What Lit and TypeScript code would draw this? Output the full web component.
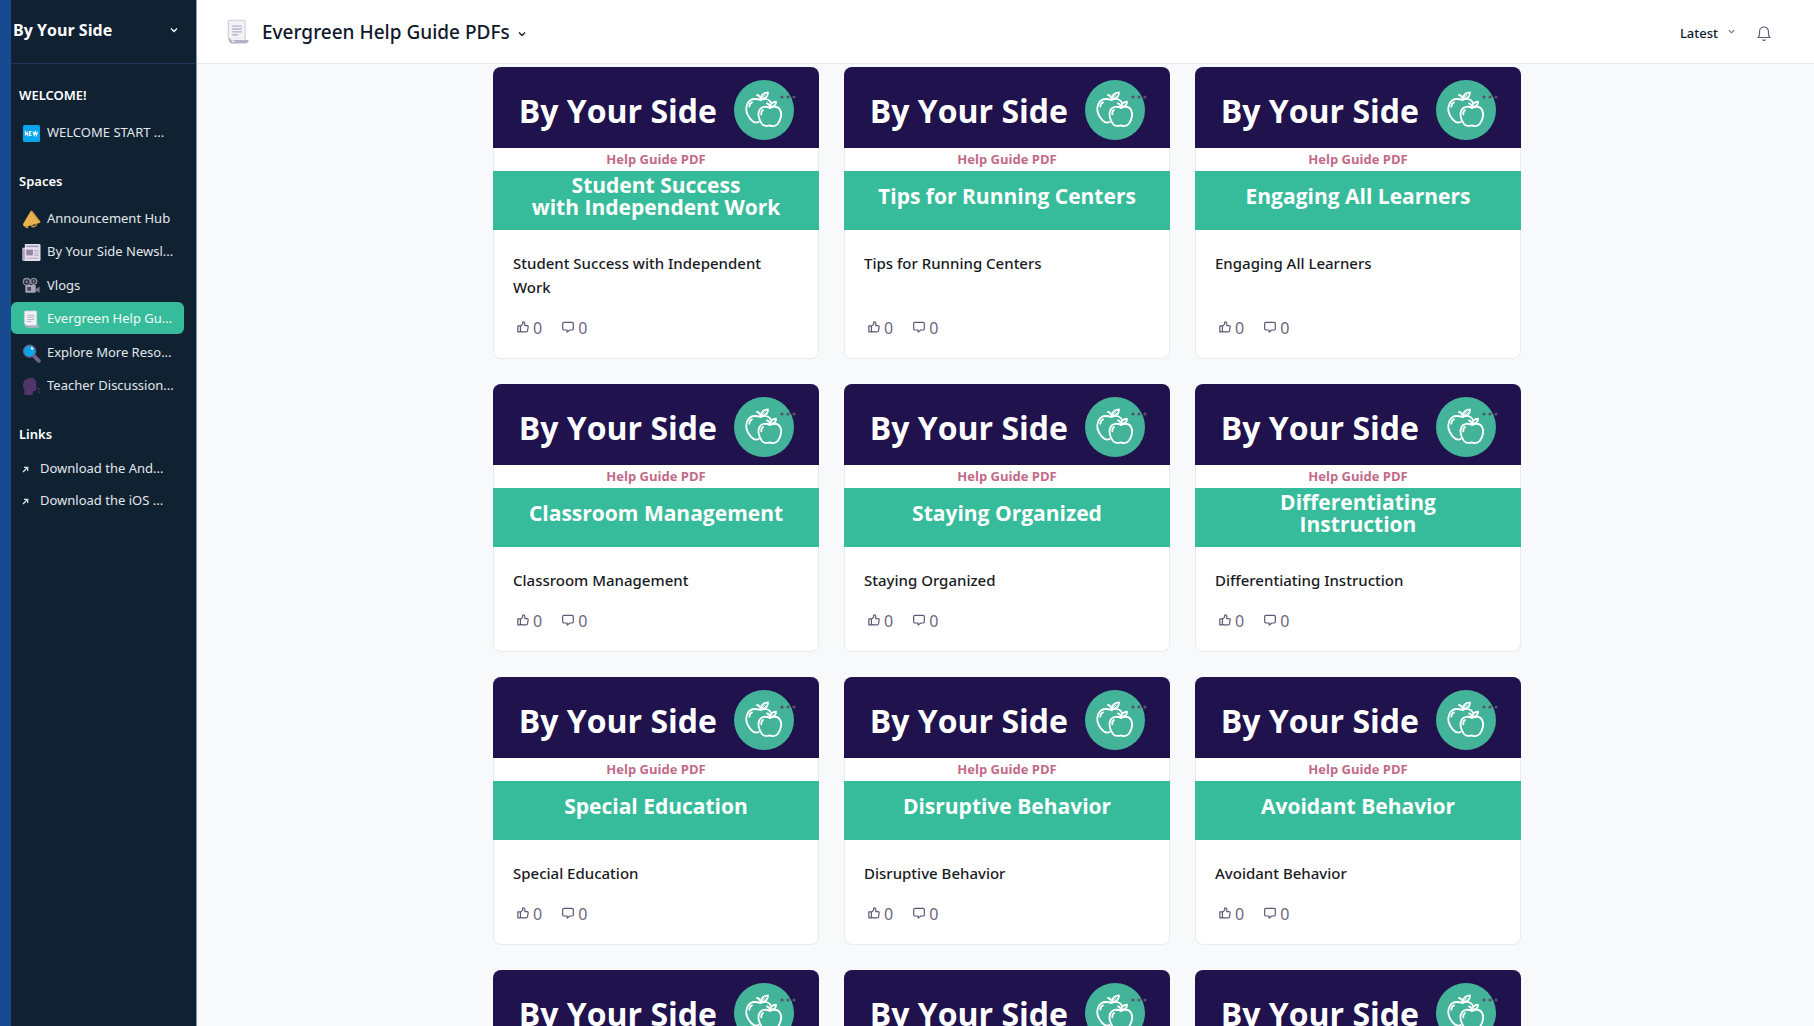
import { LitElement, html, svg, css, type TemplateResult, type SVGTemplateResult } from "lit";
import { customElement, property } from "lit/decorators.js";

const icons: Record<string, SVGTemplateResult> = {
  fresh: svg`
    <rect x="1" y="1" width="18" height="18" rx="2" fill="#06a6ee"/>
    <path d="M3.600 12V8l2.400 4V8M10 8H7.900v4H10M7.900 10h1.800M11.600 8l1.100 4 1.200-4 1.200 4 1.200-4" fill="none" stroke="#fff" stroke-width="1.100"/>`,
  horn: svg`
    <path d="M9 1.200c.8-.6 1.600-.4 2.200.4l7.900 10.200c.6.9.2 1.600-.8 1.800L4.500 17.700C2.500 18 .2 15.800 1.400 14.200z" fill="#e9b04e"/>
    <path d="M10.200 2.400 18 12.500" stroke="#d0923a" stroke-width="1" fill="none"/>
    <path d="M10 16c.4 2.500 4.800 2.200 5.300-1.200" fill="none" stroke="#d59a41" stroke-width="1.500"/>
    <path d="M3.600 17.500 6.500 16.800v2.100c-1 .5-2.500.3-2.900-.4z" fill="#d59a41"/>`,
  news: svg`
    <path d="M3 1h15a1.500 1.500 0 0 1 1.500 1.500v15A1.500 1.500 0 0 1 18 19H2a1.500 1.500 0 0 1-1.500-1.500V5H3z" fill="#e4dfea"/>
    <path d="M.5 6H3v11.500a1.200 1.200 0 0 1-2.500 0z" fill="#a9a1ba"/>
    <path d="M4.500 3.500h13" stroke="#a79fba" stroke-width="1.800"/>
    <rect x="4.500" y="7" width="7" height="6" fill="#8f86a6"/>
    <path d="M13 8h4.500M13 10.500h4.500M13 13h4.500M4.500 16h13" stroke="#b5adc4" stroke-width="1.200"/>`,
  camera: svg`
    <g fill="#2d3440" stroke="#8f8a9c" stroke-width="1.400"><circle cx="5" cy="5.200" r="3.600"/><circle cx="12.300" cy="4.600" r="3.200"/></g>
    <g fill="#8f8a9c"><circle cx="5" cy="5.200" r="1.200"/><circle cx="12.300" cy="4.600" r="1.100"/></g>
    <rect x="3.500" y="8.500" width="11" height="8" rx="1" fill="#aaa4b8"/>
    <rect x="5.500" y="10.500" width="4" height="4" fill="#4b4760"/>
    <path d="m14.500 12.500 4-2.500v6.500l-4-2z" fill="#7d7790"/>`,
  scroll: svg`
    <path d="M2.500 2a1 1 0 0 1 1-1h11a1 1 0 0 1 1 1v14.500H6a3 3 0 0 1-3.500-3z" fill="#f3f1f6" stroke="#cdc8d6" stroke-width=".8"/>
    <path d="M5.500 5.500h7.500M5.500 7.700h7.500M5.500 9.900h7.500M5.500 12.100h4.500" stroke="#b9b2c6" stroke-width="1.100"/>
    <path d="M2.700 14c0 3 .8 4.800 3 4.800h10.500c1.200 0 2-1.200 2-2.600H7.500c-.2 2-2.400 2.200-2.600 0z" fill="#b7b0c5"/>`,
  lens: svg`
    <path d="m13 13 4.700 4.700" stroke="#6d648b" stroke-width="4" stroke-linecap="round"/>
    <circle cx="8" cy="7.500" r="6.300" fill="#08a5ec" stroke="#6d648b" stroke-width="1.300"/>
    <ellipse cx="10.600" cy="4.600" rx="1.100" ry="1.600" fill="#fff" transform="rotate(-35 10.600 4.600)"/>`,
  speaker: svg`
    <path d="M8 1c4-.6 6.700 1.700 6.800 5 .1 1.300-.2 2 .3 3l.8 1.800c.2.500-.1.800-.8.900l.1 1.500c-.3 1.700-1.900 1.700-3.400 1.500L11 19H2.500v-5.500C.8 11.500.7 8.700 1.500 6 2.300 3 4.800 1.300 8 1z" fill="#503568"/>
    <path d="m16.300 13 2.700-.8M16.500 15.300l2.400.9" stroke="#503568" stroke-width="1.300"/>`,
};

const chevron = html`<svg class="chevron" viewBox="0 0 8 8" aria-hidden="true"><path d="m1 2.500 3 3 3-3" fill="none" stroke="currentColor" stroke-width="1.300"/></svg>`;

const apples = html`<svg class="apples" viewBox="0 0 180 180" aria-hidden="true">
  <circle cx="90" cy="90" r="90" fill="#43b399"/>
  <g fill="none" stroke="#fff" stroke-width="5.500" stroke-linecap="round" stroke-linejoin="round">
    <path d="M74 126C66 130 56 125 50 118C38 104 34 86 40 72C46 58 61 54 80 60C93 54 106 58 112 70"/>
    <path d="M80 60C80 53 77 47 69 45"/>
    <path d="M81 55C82 43 91 38 102 37C102 49 95 56 83 57"/>
    <path d="M84 53 93 45" stroke-width="3"/>
    <path d="M46 80C46 73 49 69 54 67"/>
    <path d="M108 84C97 78 83 79 77 89C70 101 74 119 84 132C91 140 98 139 107 136C117 140 125 139 131 132C141 119 145 101 138 89C131 79 119 79 108 84Z"/>
    <path d="M108 84C108 77 105 72 99 70"/>
    <path d="M109 79C110 69 117 66 126 65C126 74 120 80 110 80"/>
    <path d="M82 103C81 97 83 93 87 90"/>
  </g>
</svg>`;

interface Guide {
  title: string;
  lines: string[];
}

const guides: Guide[] = [
  { title: "Student Success with Independent Work", lines: ["Student Success", "with Independent Work"] },
  { title: "Tips for Running Centers", lines: ["Tips for Running Centers"] },
  { title: "Engaging All Learners", lines: ["Engaging All Learners"] },
  { title: "Classroom Management", lines: ["Classroom Management"] },
  { title: "Staying Organized", lines: ["Staying Organized"] },
  { title: "Differentiating Instruction", lines: ["Differentiating", "Instruction"] },
  { title: "Special Education", lines: ["Special Education"] },
  { title: "Disruptive Behavior", lines: ["Disruptive Behavior"] },
  { title: "Avoidant Behavior", lines: ["Avoidant Behavior"] },
  { title: "", lines: [] },
  { title: "", lines: [] },
  { title: "", lines: [] },
];

const spaces: [string, string][] = [
  ["horn", "Announcement Hub"],
  ["news", "By Your Side Newsl..."],
  ["camera", "Vlogs"],
  ["scroll", "Evergreen Help Gu..."],
  ["lens", "Explore More Reso..."],
  ["speaker", "Teacher Discussion..."],
];

@customElement("guide-card")
class GuideCard extends LitElement {
  @property({ attribute: false }) guide!: Guide;

  static styles = css`
    :host { display: flex; }
    .card {
      flex: 1; min-width: 0; display: flex; flex-direction: column; position: relative;
      background: #fff; border-radius: 8px; overflow: hidden; box-shadow: inset 0 0 0 1px #e9ebf0;
    }
    .top {
      height: 81px; background: #20124d; display: flex; align-items: center; justify-content: flex-end;
      gap: 17px; padding: 0 25px 0 0; box-sizing: border-box; color: #fff;
      font: 700 32px/44px "Open Sans", sans-serif; white-space: nowrap;
    }
    .apples { width: 60px; height: 60px; flex: none; margin-top: 4px; }
    .brand { margin-top: 6px; }
    .kind {
      height: 23px; text-align: center; color: #c26a88;
      font: 700 13px/23px "Open Sans", sans-serif;
    }
    .name {
      height: 59px; box-sizing: border-box; padding-bottom: 9px; background: #37bc9b; color: #fff;
      display: flex; flex-direction: column; justify-content: center; text-align: center;
      font: 700 21px/22px "Open Sans", sans-serif;
    }
    .more {
      position: absolute; top: 22px; right: 20px; width: 22px; height: 16px; padding: 0;
      border: 0; background: none; color: #57536a; display: grid; place-items: center;
    }
    .more svg { width: 16px; height: 4px; }
    .body { flex: 1; display: flex; flex-direction: column; padding: 21px 20px 19px; }
    .title { margin: 0 0 17px; color: #191b23; font: 500 15px/24px "Noto Sans", sans-serif; }
    .stats { margin-top: auto; display: flex; gap: 20px; padding-left: 4px; }
    .stat {
      display: flex; align-items: center; gap: 4px; padding: 0; border: 0; background: none;
      color: #6b6880; font: 400 16px/24px "Noto Sans", sans-serif;
    }
    .stat svg { width: 12px; height: 12px; margin-bottom: 2px; }
  `;

  render(): TemplateResult {
    const { title, lines } = this.guide;
    return html`<article class="card">
      <div class="top"><span class="brand">By Your Side</span>${apples}</div>
      <div class="kind">Help Guide PDF</div>
      <div class="name">${lines.map((l) => html`<span>${l}</span>`)}</div>
      <button class="more" aria-label="More options"><svg viewBox="0 0 16 4"><g fill="currentColor"><circle cx="2" cy="2" r="1.600"/><circle cx="8" cy="2" r="1.600"/><circle cx="14" cy="2" r="1.600"/></g></svg></button>
      <div class="body">
        <h2 class="title">${title}</h2>
        <div class="stats">
          <button class="stat" aria-label="Likes"><svg viewBox="0 0 14 14"><path d="M1 5.800h3v7H1zM4 6.300 6.600 3.600V1.500c1-.9 2.500-.2 2.500 1.200v2.600h2.500c1 0 1.500.7 1.400 1.500l-.7 4.600c-.1.800-.7 1.300-1.500 1.300H6.200L4 12" fill="none" stroke="#5c5875" stroke-width="1.400" stroke-linejoin="round"/></svg>0</button>
          <button class="stat" aria-label="Comments"><svg viewBox="0 0 14 14"><path d="M2.300 1.500h9.400A1.500 1.500 0 0 1 13.200 3v6a1.500 1.500 0 0 1-1.500 1.500H9.200L6 13v-2.500H2.300A1.500 1.500 0 0 1 .8 9V3a1.500 1.500 0 0 1 1.500-1.500z" fill="none" stroke="#5c5875" stroke-width="1.400" stroke-linejoin="round"/></svg>0</button>
        </div>
      </div>
    </article>`;
  }
}

@customElement("app-root")
class AppRoot extends LitElement {
  static styles = css`
    :host {
      display: flex; height: 100vh; overflow: hidden; background: #f7f9fb;
      font-family: "Noto Sans", "Open Sans", sans-serif; color: #10182b;
    }
    button { font: inherit; color: inherit; background: none; border: 0; padding: 0; }
    a { color: inherit; text-decoration: none; }
    ul { list-style: none; margin: 0; padding: 0; }
    .chevron { width: 8px; height: 8px; flex: none; }

    .side {
      width: 197px; flex: none; box-sizing: border-box; color: #e2e7ec; background: #102132;
      border-left: 11px solid #174a8e; border-right: 1px solid #8d96a3;
    }
    .brand {
      width: 100%; height: 64px; display: flex; align-items: center; justify-content: space-between;
      box-sizing: border-box; padding: 0 18px 3px 2px; border-bottom: 1px solid #21355a;
      color: #fff; font: 700 16px/24px "Open Sans", sans-serif;
    }
    .heading { margin: 0; padding-left: 8px; color: #fff; font-size: 13px; font-weight: 600; line-height: 24px; }
    .group { padding-top: 21px; }
    .group:first-of-type { padding-top: 19px; }
    .list { display: flex; flex-direction: column; justify-content: space-between; padding-top: 9px; }
    .list.long { min-height: 199px; }
    .list.links { padding-top: 6px; }
    .item {
      display: flex; align-items: center; gap: 6px; height: 32px; margin-right: 12px; padding-left: 11px;
      border-radius: 6px; font-size: 13px; white-space: nowrap;
    }
    .item svg { width: 19px; height: 19px; margin-top: 3px; flex: none; }
    .item.active { background: #37bc9b; color: #f2fbf8; }
    .item .out { width: 7px; height: 7px; margin-right: 5px; }

    .main { flex: 1; min-width: 0; display: flex; flex-direction: column; }
    .bar {
      height: 64px; flex: none; box-sizing: border-box; display: flex; align-items: center;
      justify-content: space-between; padding: 0 43px 0 28px; background: #fff; border-bottom: 1px solid #e4e9ed;
    }
    .page { display: flex; align-items: center; }
    .page .icon { width: 26px; height: 26px; margin-right: 11px; }
    .page h1 { margin: 0 8px 0 0; font-size: 19px; font-weight: 500; line-height: 28px; }
    .tools { display: flex; align-items: center; gap: 22px; padding-top: 3px; }
    .sort { display: flex; align-items: center; gap: 10px; font-size: 13px; font-weight: 500; line-height: 20px; }
    .sort .chevron { width: 7px; height: 7px; margin-bottom: 4px; color: #6b6880; }
    .bell { display: grid; }
    .bell svg { width: 14px; height: 15px; }
    .feed { flex: 1; min-height: 0; overflow-y: auto; scrollbar-width: none; padding: 3px 24px 0 27px; }
    .grid {
      max-width: 1028px; margin: 0 auto; display: grid; gap: 25px;
      grid-template-columns: repeat(3, minmax(0, 1fr));
    }
  `;

  private item(icon: string, label: string, active = false): TemplateResult {
    return html`<li><a class="item ${active ? "active" : ""}" href="#"><svg viewBox="0 0 20 20" aria-hidden="true">${icons[icon]}</svg><span>${label}</span></a></li>`;
  }

  private link(label: string): TemplateResult {
    return html`<li><a class="item" href="#"><svg class="out" viewBox="0 0 7 7" aria-hidden="true"><path d="M1 6 5.500 1.500M2 1.300h3.700V5" fill="none" stroke="currentColor" stroke-width="1.200"/></svg><span>${label}</span></a></li>`;
  }

  render(): TemplateResult {
    return html`
      <nav class="side">
        <button class="brand">By Your Side ${chevron}</button>
        <section class="group">
          <h2 class="heading">WELCOME!</h2>
          <ul class="list">${this.item("fresh", "WELCOME START ...")}</ul>
        </section>
        <section class="group">
          <h2 class="heading">Spaces</h2>
          <ul class="list long">${spaces.map(([i, l]) => this.item(i, l, i === "scroll"))}</ul>
        </section>
        <section class="group">
          <h2 class="heading">Links</h2>
          <ul class="list links">${this.link("Download the And...")}${this.link("Download the iOS ...")}</ul>
        </section>
      </nav>
      <div class="main">
        <header class="bar">
          <div class="page">
            <svg class="icon" viewBox="0 0 20 20" aria-hidden="true">${icons.scroll}</svg>
            <h1>Evergreen Help Guide PDFs</h1>
            <button aria-label="Space menu">${chevron}</button>
          </div>
          <div class="tools">
            <button class="sort">Latest ${chevron}</button>
            <button class="bell" aria-label="Notifications"><svg viewBox="0 0 14 15"><path d="M1 11.500h12c-1.200-1-1.500-2-1.500-3.500V5.500a4.500 4.500 0 0 0-9 0V8c0 1.500-.3 2.500-1.500 3.500zM5.500 13.500a1.700 1.700 0 0 0 3 0" fill="none" stroke="#5c5875" stroke-width="1.200" stroke-linejoin="round"/></svg></button>
          </div>
        </header>
        <main class="feed">
          <div class="grid">${guides.map((g) => html`<guide-card .guide=${g}></guide-card>`)}</div>
        </main>
      </div>`;
  }
}
